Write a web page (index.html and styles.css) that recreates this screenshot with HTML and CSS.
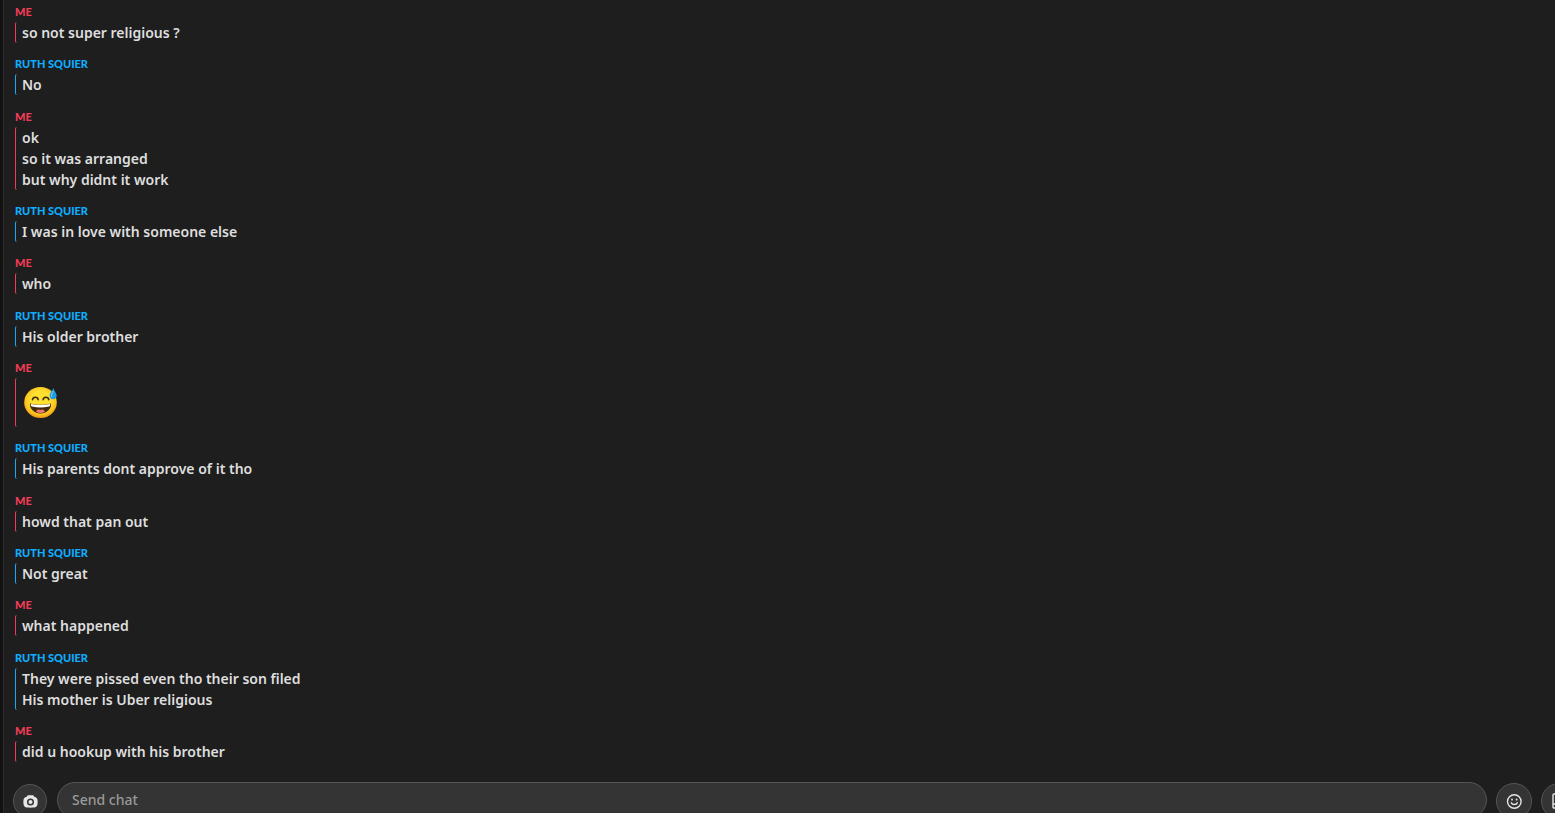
FILE: index.html
```html
<!DOCTYPE html>
<html lang="en">
    <head>
        <meta charset="utf-8">
        <title>Chat</title>
        <link rel="stylesheet" href="styles.css">
    </head>
    <body>
        <main class="chat">

            <!-- Messages -->
            <div class="messages">
                <div class="message me">
                    <div class="name">ME</div>
                    <div class="lines"><p>so not super religious ?</p></div>
                </div>
                <div class="message friend">
                    <div class="name">RUTH SQUIER</div>
                    <div class="lines"><p>No</p></div>
                </div>
                <div class="message me">
                    <div class="name">ME</div>
                    <div class="lines">
                        <p>ok</p>
                        <p>so it was arranged</p>
                        <p>but why didnt it work</p>
                    </div>
                </div>
                <div class="message friend">
                    <div class="name">RUTH SQUIER</div>
                    <div class="lines"><p>I was in love with someone else</p></div>
                </div>
                <div class="message me">
                    <div class="name">ME</div>
                    <div class="lines"><p>who</p></div>
                </div>
                <div class="message friend">
                    <div class="name">RUTH SQUIER</div>
                    <div class="lines"><p>His older brother</p></div>
                </div>
                <div class="message me">
                    <div class="name">ME</div>
                    <div class="lines emoji">
                        <svg viewBox="0 0 36 36" width="36" height="36" role="img" aria-label="Grinning face with sweat">
                            <defs>
                                <radialGradient id="face" cx="50%" cy="42%" r="56%">
                                    <stop offset="50%" stop-color="#fde030"/>
                                    <stop offset="85%" stop-color="#fbc21e"/>
                                    <stop offset="100%" stop-color="#f09a1a"/>
                                </radialGradient>
                            </defs>
                            <ellipse cx="18.500" cy="18.500" rx="16.300" ry="15.600" fill="url(#face)"/>
                            <path d="M10.500 15.700c.5-3.300 5.200-3.300 5.700 0M21.100 15.700c.5-3.300 5.200-3.300 5.700 0" fill="none" stroke="#422b0d" stroke-width="1.600" stroke-linecap="round"/>
                            <path d="M8 19.500c6.500 1.800 14.500 1.800 21 0 .6 5.500-4.500 10-10.500 10s-11.100-4.500-10.500-10z" fill="#422b0d"/>
                            <path d="M8.800 19.900c6.200 1.500 13.200 1.500 19.400 0 .1 1.300-.4 2.300-1.200 2.600-5.300 1.300-11.700 1.300-17 0-.8-.3-1.300-1.300-1.200-2.600z" fill="#fff"/>
                            <path d="M14 27.800c1.300-3 3.200-2.500 4.500-1.800 1.300-.7 3.200-1.200 4.500 1.800-2.700 1.700-6.300 1.700-9 0z" fill="#ed7770"/>
                            <path d="M31.300 4c.5 2.500 3.400 5.200 3.400 7.500 0 2.300-1.600 3.800-3.700 3.800s-3.600-1.700-3.400-4c.2-2.500 2.900-4.700 3.700-7.300z" fill="#1f9be5"/>
                            <path d="M31 7.500c-.3 1.800-2 3-1.700 5" fill="none" stroke="#81d4fa" stroke-linecap="round"/>
                        </svg>
                    </div>
                </div>
                <div class="message friend">
                    <div class="name">RUTH SQUIER</div>
                    <div class="lines"><p>His parents dont approve of it tho</p></div>
                </div>
                <div class="message me">
                    <div class="name">ME</div>
                    <div class="lines"><p>howd that pan out</p></div>
                </div>
                <div class="message friend">
                    <div class="name">RUTH SQUIER</div>
                    <div class="lines"><p>Not great</p></div>
                </div>
                <div class="message me">
                    <div class="name">ME</div>
                    <div class="lines"><p>what happened</p></div>
                </div>
                <div class="message friend">
                    <div class="name">RUTH SQUIER</div>
                    <div class="lines">
                        <p>They were pissed even tho their son filed</p>
                        <p>His mother is Uber religious</p>
                    </div>
                </div>
                <div class="message me">
                    <div class="name">ME</div>
                    <div class="lines"><p>did u hookup with his brother</p></div>
                </div>
            </div>

            <!-- Composer -->
            <form class="composer">
                <button type="button" class="round camera" aria-label="Camera">
                    <svg viewBox="0 0 16 14" width="16" height="14">
                        <path d="M5.800 1.200h5.400l1.400 1.900c1.800.3 2.700 1.300 2.900 3 .2 1.500.2 2.700 0 4.200-.3 2-1.400 3-3.400 3.200-2.400.2-4.800.2-7.200 0-2-.2-3.100-1.200-3.400-3.200-.2-1.500-.2-2.700 0-4.200.2-1.700 1.100-2.700 2.900-3z" fill="#e6e6e6"/>
                        <circle cx="8.500" cy="8" r="2.800" fill="none" stroke="#343434" stroke-width="1.500"/>
                    </svg>
                </button>
                <input type="text" class="field" placeholder="Send chat" aria-label="Send chat">
                <button type="button" class="round" aria-label="Emoji">
                    <svg viewBox="0 0 16 16" width="16" height="16" fill="none" stroke="#e6e6e6" stroke-width="1.400" stroke-linecap="round">
                        <circle cx="8.300" cy="8.500" r="6.800"/>
                        <path d="M5.300 9.800c.8 2.300 5.200 2.300 6 0"/>
                        <path d="M6 6.300v.4M10.600 6.300v.4" stroke-width="1.700"/>
                    </svg>
                </button>
                <button type="button" class="round" aria-label="Stickers">
                    <svg viewBox="0 0 16 16" width="16" height="16" fill="none" stroke="#e6e6e6" stroke-width="1.400">
                        <rect x="2" y="1" width="13" height="14" rx="1"/>
                        <path d="M2 11h13"/>
                    </svg>
                </button>
            </form>
        </main>
    </body>
</html>
```
FILE: styles.css
```css
* {
    box-sizing: border-box;
}
body {
    margin: 0;
    padding-left: 3px;
    height: 100vh;
    overflow: hidden;
    background-color: #121212;
    color: #dedede;
    font-family: "Noto Sans", "Liberation Sans", sans-serif;
}
.chat {
    display: flex;
    flex-direction: column;
    height: 100%;
    border-left: 1px solid #2b2b2b;
    background-color: #1e1e1e;
}
.messages {
    flex: 1;
    display: flex;
    flex-direction: column;
    justify-content: space-between;
    padding: 5px 11px 20px;
}
.name {
    margin-bottom: 3px;
    font-family: Lato, "Liberation Sans", sans-serif;
    font-size: 11px;
    line-height: 14px;
    font-weight: 900;
}
.me .name {
    color: #f23c57;
}
.friend .name {
    color: #0eadff;
}
.lines {
    padding-left: 6px;
    border-left: 1px solid;
    border-radius: 2px;
    font-size: 14px;
    line-height: 21px;
    font-weight: 600;
}
.lines p {
    margin: 0;
}
.me .lines {
    border-color: #f23c57;
}
.friend .lines {
    border-color: #0eadff;
}
.emoji {
    display: flex;
    align-items: center;
    height: 49px;
}
.composer {
    flex: none;
    display: flex;
    align-items: flex-start;
    gap: 9px;
    height: 31px;
    padding-left: 9px;
}
.round {
    flex: none;
    display: flex;
    align-items: center;
    justify-content: center;
    width: 36px;
    height: 36px;
    margin-top: 1px;
    padding: 0;
    border: 1px solid #555;
    border-radius: 50%;
    background-color: #343434;
    cursor: pointer;
}
.camera {
    width: 34px;
    height: 34px;
    margin-top: 2px;
    margin-right: 1px;
}
.field {
    flex: 1;
    min-width: 0;
    height: 36px;
    padding: 0 14px 2px;
    border: 1px solid #555;
    border-radius: 18px;
    background-color: #343434;
    color: #dedede;
    font-family: inherit;
    font-size: 14px;
    font-weight: 500;
    outline: none;
}
.field::placeholder {
    color: #999;
}
.composer .round:last-child {
    margin-right: -22px;
}
```
